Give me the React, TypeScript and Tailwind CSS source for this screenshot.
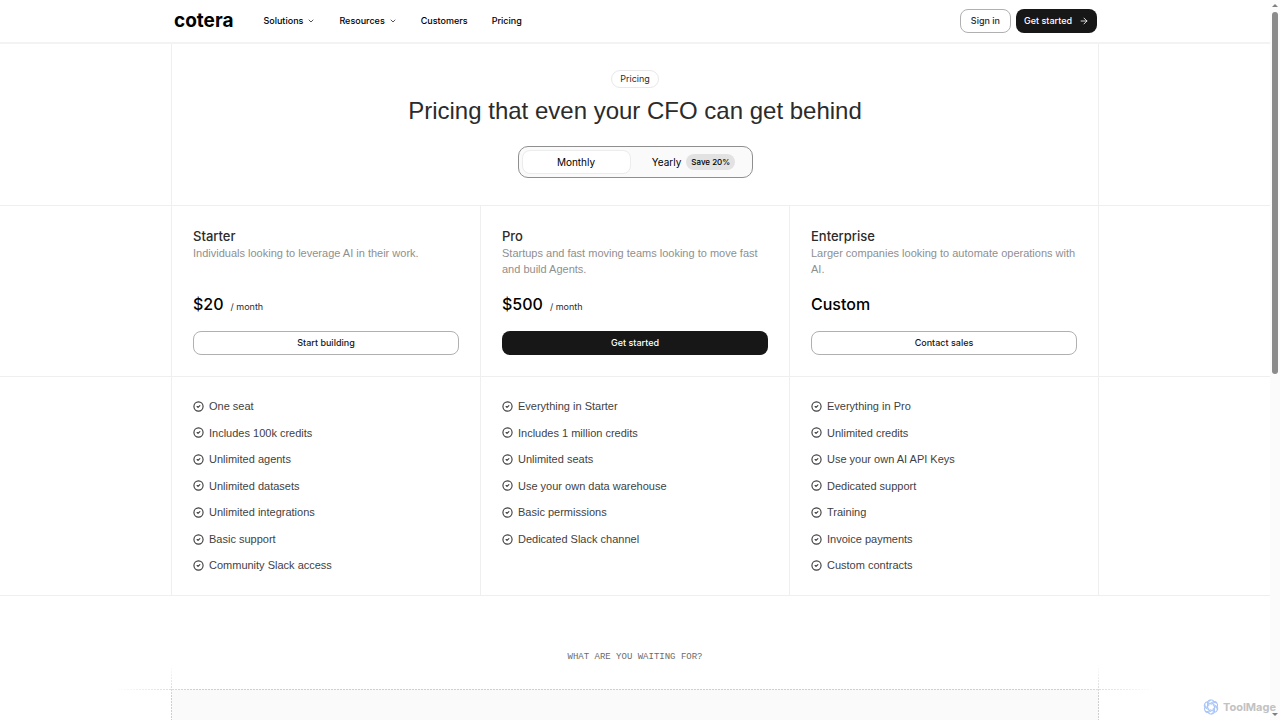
import { ArrowRight, ChevronDown, CircleCheck } from "lucide-react"

const plans = [
  {
    name: "Starter",
    description: "Individuals looking to leverage AI in their work.",
    price: "$20",
    period: "/ month",
    cta: "Start building",
    primary: false,
    features: [
      "One seat",
      "Includes 100k credits",
      "Unlimited agents",
      "Unlimited datasets",
      "Unlimited integrations",
      "Basic support",
      "Community Slack access",
    ],
  },
  {
    name: "Pro",
    description: "Startups and fast moving teams looking to move fast and build Agents.",
    price: "$500",
    period: "/ month",
    cta: "Get started",
    primary: true,
    features: [
      "Everything in Starter",
      "Includes 1 million credits",
      "Unlimited seats",
      "Use your own data warehouse",
      "Basic permissions",
      "Dedicated Slack channel",
    ],
  },
  {
    name: "Enterprise",
    description: "Larger companies looking to automate operations with AI.",
    price: "Custom",
    period: "",
    cta: "Contact sales",
    primary: false,
    features: [
      "Everything in Pro",
      "Unlimited credits",
      "Use your own AI API Keys",
      "Dedicated support",
      "Training",
      "Invoice payments",
      "Custom contracts",
    ],
  },
]

function Header() {
  return (
    <header className="border-b-2 border-[#f3f3f3]">
      <div className="mx-auto flex h-[42px] max-w-[928px] items-center pr-[2px] pl-[3px]">
        <a href="#" className="text-[19px] leading-5 font-bold text-black">cotera</a>
        <nav className="ml-[30px] flex items-center gap-6 text-[9px] font-medium text-black">
          <button type="button" className="flex items-center gap-1">
            Solutions <ChevronDown size={8} />
          </button>
          <button type="button" className="flex items-center gap-1">
            Resources <ChevronDown size={8} />
          </button>
          <a href="#">Customers</a>
          <a href="#">Pricing</a>
        </nav>
        <div className="ml-auto flex items-center gap-[5px] text-[9px] font-medium">
          <a href="#" className="flex h-6 items-center rounded-lg border border-[#b0b0b0] px-[10px] text-[#2b2b2b]">Sign in</a>
          <a href="#" className="flex h-6 items-center gap-[7px] rounded-lg bg-[#171717] px-2 text-white">
            Get started <ArrowRight size={10} strokeWidth={2} />
          </a>
        </div>
      </div>
    </header>
  )
}

function Hero() {
  return (
    <section className="border-b border-[#efefef]">
      <div className="mx-auto flex max-w-[928px] flex-col items-center border-x border-[#efefef] pt-[26px] pb-[27px]">
        <span className="flex h-[18px] items-center rounded-full border border-[#e8e8e8] px-2 text-[9px] text-[#2b2b2b]">Pricing</span>
        <h1 className="mt-[7px] font-['Liberation_Sans',sans-serif] text-[24px] leading-8 text-[#2b2b2b]">Pricing that even your CFO can get behind</h1>
        <div className="mt-[19px] flex h-8 w-[235px] rounded-[10px] border border-[#8f8f8f] bg-[#fafafa] p-[3px] text-[10px] text-black">
          <button type="button" className="w-[109px] rounded-lg border border-[#ececec] bg-white">Monthly</button>
          <button type="button" className="flex flex-1 items-center justify-center gap-[5px] pl-2">
            Yearly
            <span className="flex h-4 items-center rounded-full bg-[#e2e2e2] px-[5px] text-[8px] font-medium">Save 20%</span>
          </button>
        </div>
      </div>
    </section>
  )
}

function Plans() {
  return (
    <>
      {/* Plan names and prices */}
      <section className="border-b border-[#efefef]">
        <div className="mx-auto grid max-w-[928px] grid-cols-3 border-r border-[#efefef]">
          {plans.map((plan) => (
            <div key={plan.name} className="flex flex-col border-l border-[#efefef] p-[21px]">
              <h2 className="text-[13px] leading-[18px] font-medium text-[#2b2b2b]">{plan.name}</h2>
              <p className="h-8 font-['Liberation_Sans',sans-serif] text-[11px] leading-4 text-[#8f8f8f]">{plan.description}</p>
              <div className="mt-[15px] flex h-6 items-baseline gap-[7px]">
                <span className="text-[16px] leading-6 font-medium text-black">{plan.price}</span>
                {plan.period && <span className="text-[9px] text-[#2b2b2b]">{plan.period}</span>}
              </div>
              <button
                type="button"
                className={
                  plan.primary
                    ? "mt-[15px] h-6 rounded-lg bg-[#171717] text-[9px] font-medium text-white"
                    : "mt-[15px] h-6 rounded-lg border border-[#b0b0b0] text-[9px] font-medium text-[#171717]"
                }
              >
                {plan.cta}
              </button>
            </div>
          ))}
        </div>
      </section>

      {/* Feature lists */}
      <section className="border-b border-[#efefef]">
        <div className="mx-auto grid max-w-[928px] grid-cols-3 border-r border-[#efefef]">
          {plans.map((plan) => (
            <div key={plan.name} className="border-l border-[#efefef] px-[21px] py-4">
              <ul className="grid h-[186px] grid-rows-7 font-['Liberation_Sans',sans-serif] text-[11px] text-[#3f3f3f]">
                {plan.features.map((feature) => (
                  <li key={feature} className="flex items-center gap-[5px]">
                    <CircleCheck size={11} strokeWidth={2.5} />
                    {feature}
                  </li>
                ))}
              </ul>
            </div>
          ))}
        </div>
      </section>
    </>
  )
}

function Waiting() {
  return (
    <section className="pt-[53px]">
      <p className="text-center font-['Liberation_Mono',monospace] text-[9px] leading-4 text-[#6b6b6b]">WHAT ARE YOU WAITING FOR?</p>
      <div className="relative mx-auto mt-6 h-80 max-w-[928px] bg-[#fafafa]">
        {/* Dotted guides that fade out past the corners */}
        <div className="absolute top-0 -right-14 -left-14 h-px bg-[repeating-linear-gradient(to_right,#cfcfcf_0_2px,transparent_2px_3px)] [mask-image:linear-gradient(to_right,transparent,black_80px,black_calc(100%-80px),transparent)]" />
        <div className="absolute -top-6 bottom-0 left-0 w-px bg-[repeating-linear-gradient(to_bottom,#cfcfcf_0_2px,transparent_2px_3px)] [mask-image:linear-gradient(to_bottom,transparent,black_32px)]" />
        <div className="absolute -top-6 right-0 bottom-0 w-px bg-[repeating-linear-gradient(to_bottom,#cfcfcf_0_2px,transparent_2px_3px)] [mask-image:linear-gradient(to_bottom,transparent,black_32px)]" />
      </div>
    </section>
  )
}

const petals = [0, 60, 120, 180, 240, 300]

function Watermark() {
  return (
    <div className="absolute right-1 bottom-[5px] flex items-center gap-1 text-[11px] leading-4 font-bold text-[#c2c2c2]">
      <svg width="16" height="16" viewBox="0 0 24 24" fill="none" stroke="#a9c6f7" strokeWidth="1.6" strokeLinecap="round">
        {petals.map((angle) => (
          <path key={angle} d="M8.500 10V5.200A4 4 0 0 1 15.800 3.200M8.500 8l6.500-3.700a4 4 0 0 1 5.500 1.500" transform={`rotate(${angle} 12 12)`} />
        ))}
      </svg>
      ToolMage
    </div>
  )
}

function Scrollbar() {
  return (
    <div className="flex w-[10px] flex-col items-center justify-between bg-[#fbfbfb] py-1">
      <div className="flex flex-col items-center gap-[5px]">
        <svg width="6" height="3" viewBox="0 0 6 3"><path d="M3 0l3 3H0z" fill="#7f7f7f" /></svg>
        <div className="h-[calc(50vh+2px)] w-[6px] rounded-full bg-[#8b8b8b]" />
      </div>
      <svg width="6" height="3" viewBox="0 0 6 3"><path d="M0 0h6L3 3z" fill="#7f7f7f" /></svg>
    </div>
  )
}

export default function App() {
  return (
    <div className="relative flex h-screen overflow-hidden bg-white font-['Inter',sans-serif]">
      <main className="flex-1">
        <Header />
        <Hero />
        <Plans />
        <Waiting />
      </main>
      <Scrollbar />
      <Watermark />
    </div>
  )
}
